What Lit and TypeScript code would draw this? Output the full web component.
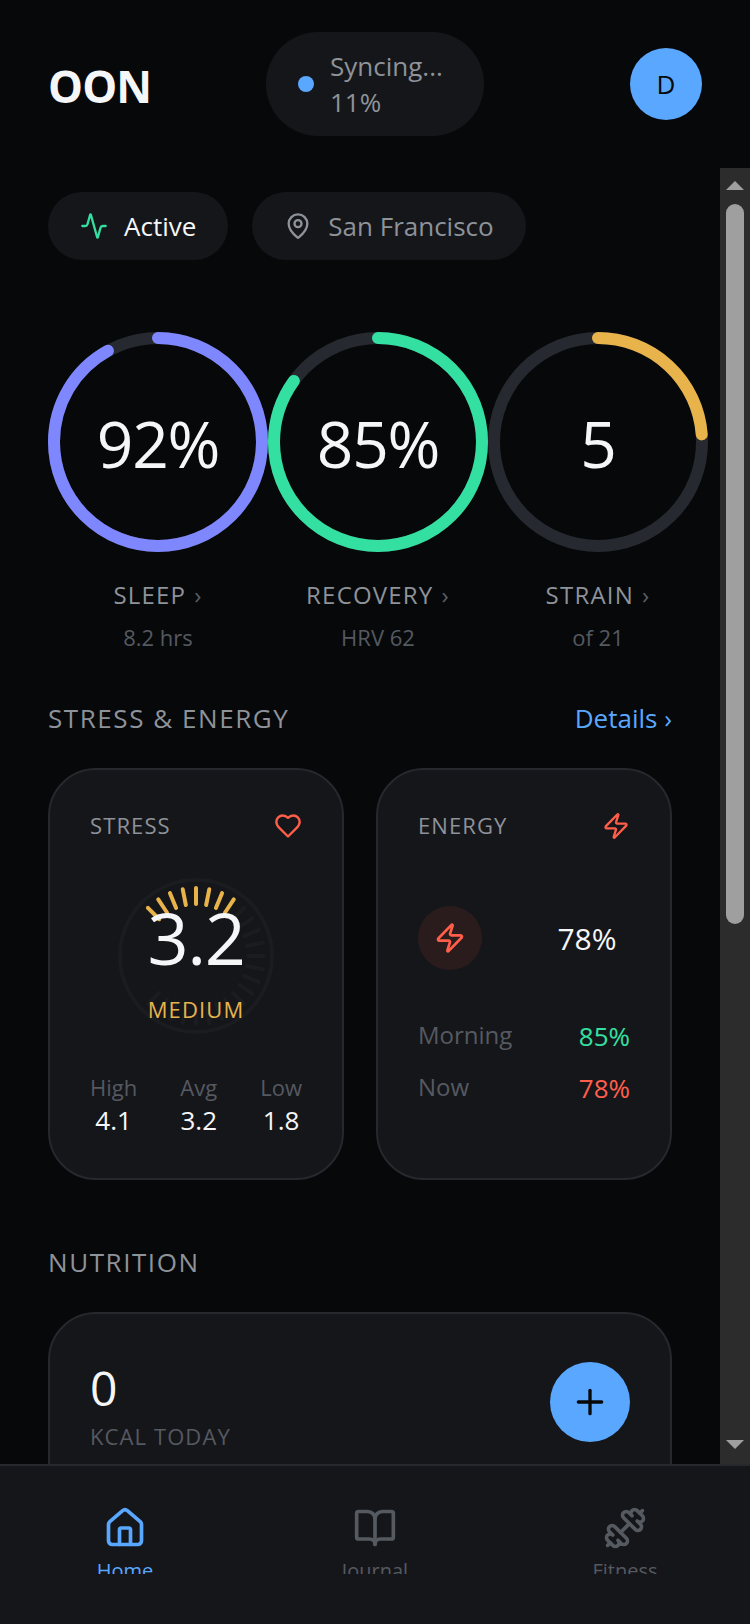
import { LitElement, html, css, svg } from "lit";
import { customElement, property } from "lit/decorators.js";

const ICONS: Record<string, unknown> = {
  activity: svg`<path d="M22 12h-2.48a2 2 0 0 0-1.93 1.46l-2.35 8.36a.25.25 0 0 1-.48 0L9.24 2.18a.25.25 0 0 0-.48 0l-2.35 8.36A2 2 0 0 1 4.49 12H2"/>`,
  pin: svg`<path d="M20 10c0 4.993-5.539 10.193-7.399 11.799a1 1 0 0 1-1.202 0C9.539 20.193 4 14.993 4 10a8 8 0 0 1 16 0"/><circle cx="12" cy="10" r="3"/>`,
  heart: svg`<path d="M19 14c1.49-1.46 3-3.21 3-5.5A5.5 5.5 0 0 0 16.5 3c-1.76 0-3 .5-4.5 2-1.5-1.5-2.74-2-4.5-2A5.5 5.5 0 0 0 2 8.5c0 2.3 1.5 4.05 3 5.5l7 7Z"/>`,
  zap: svg`<path d="M4 14a1 1 0 0 1-.78-1.63l9.9-10.2a.5.5 0 0 1 .86.46l-1.92 6.02A1 1 0 0 0 13 10h7a1 1 0 0 1 .78 1.63l-9.9 10.2a.5.5 0 0 1-.86-.46l1.92-6.02A1 1 0 0 0 11 14z"/>`,
  plus: svg`<path d="M5 12h14"/><path d="M12 5v14"/>`,
  home: svg`<path d="M15 21v-8a1 1 0 0 0-1-1h-4a1 1 0 0 0-1 1v8"/><path d="M3 10a2 2 0 0 1 .709-1.528l7-5.999a2 2 0 0 1 2.582 0l7 5.999A2 2 0 0 1 21 10v9a2 2 0 0 1-2 2H5a2 2 0 0 1-2-2z"/>`,
  book: svg`<path d="M12 7v14"/><path d="M3 18a1 1 0 0 1-1-1V4a1 1 0 0 1 1-1h5a4 4 0 0 1 4 4 4 4 0 0 1 4-4h5a1 1 0 0 1 1 1v13a1 1 0 0 1-1 1h-6a3 3 0 0 0-3 3 3 3 0 0 0-3-3z"/>`,
  dumbbell: svg`<path d="M17.596 12.768a2 2 0 1 0 2.829-2.829l-1.768-1.767a2 2 0 0 0 2.828-2.829l-2.828-2.828a2 2 0 0 0-2.829 2.828l-1.767-1.768a2 2 0 1 0-2.829 2.829z"/><path d="m2.5 21.5 1.4-1.4"/><path d="m20.1 3.9 1.4-1.4"/><path d="M5.343 21.485a2 2 0 1 0 2.829-2.828l1.767 1.768a2 2 0 1 0 2.829-2.829l-6.364-6.364a2 2 0 1 0-2.829 2.829l1.768 1.767a2 2 0 0 0-2.828 2.829z"/><path d="m9.6 14.4 4.8-4.8"/>`,
};

@customElement("line-icon")
class LineIcon extends LitElement {
  @property() name = "";

  static styles = css`
    :host { display: block; flex: none; width: 28px; height: 28px; }
    svg {
      display: block; width: 100%; height: 100%;
      fill: none; stroke: currentColor; stroke-width: 2;
      stroke-linecap: round; stroke-linejoin: round;
    }
  `;

  render() {
    return html`<svg viewBox="0 0 24 24" aria-hidden="true">${ICONS[this.name]}</svg>`;
  }
}

@customElement("metric-ring")
class MetricRing extends LitElement {
  @property() value = "";
  @property() label = "";
  @property() detail = "";
  @property() tone = "sleep";
  @property({ type: Number }) percent = 0;

  static styles = css`
    :host { display: block; flex: none; width: 220px; }
    .metric {
      display: flex; flex-direction: column; align-items: center; width: 100%;
      margin: 0; padding: 0; border: 0; background: none; font: inherit;
      color: inherit; cursor: pointer;
    }
    .dial { display: grid; width: 220px; height: 220px; place-items: center; }
    .dial > * { grid-area: 1 / 1; }
    .ring { display: block; width: 220px; height: 220px; fill: none; stroke-width: 12; }
    .track { stroke: #262a30; }
    .arc { stroke-linecap: round; }
    .sleep { stroke: #7f87ff; }
    .recovery { stroke: #34e0a1; }
    .strain { stroke: #e8b34b; }
    .value {
      padding-top: 4px; font-size: 64px; line-height: 90px; letter-spacing: -0.02em;
      color: #f5f6f8;
    }
    .label {
      display: flex; gap: 8px; margin-top: 26px; font-size: 24px; line-height: 34px;
      letter-spacing: 0.05em; color: #8e9299;
    }
    .chevron { color: #5a5e66; }
    .detail { margin-top: 10px; font-size: 22px; line-height: 30px; color: #555960; }
  `;

  render() {
    return html`
      <button class="metric" type="button">
        <span class="dial">
          <svg class="ring" viewBox="0 0 220 220" aria-hidden="true">
            <circle class="track" cx="110" cy="110" r="104"/>
            <circle class="arc ${this.tone}" cx="110" cy="110" r="104" pathLength="100"
              stroke-dasharray="${this.percent} 100" transform="rotate(-90 110 110)"/>
          </svg>
          <span class="value">${this.value}</span>
        </span>
        <span class="label">${this.label}<span class="chevron">›</span></span>
        <span class="detail">${this.detail}</span>
      </button>
    `;
  }
}

@customElement("stress-gauge")
class StressGauge extends LitElement {
  @property({ type: Number }) value = 0;
  @property() level = "";

  static styles = css`
    :host { display: grid; width: 180px; height: 180px; place-items: center; }
    .dial { width: 180px; height: 180px; grid-area: 1 / 1; fill: none; stroke-width: 4; }
    .rim { stroke: #1a1c20; }
    .tick { stroke: #1a1c20; stroke-linecap: round; }
    .lit { stroke: #e8b34b; }
    .reading {
      grid-area: 1 / 1; display: flex; flex-direction: column; align-items: center; gap: 6px;
    }
    .value { font-size: 72px; line-height: 100px; letter-spacing: -0.02em; color: #f5f6f8; }
    .level { font-size: 22px; line-height: 32px; letter-spacing: 0.05em; color: #e8b34b; }
  `;

  render() {
    const total = 25;
    const lit = Math.round((this.value / 10) * total);
    return html`
      <svg class="dial" viewBox="0 0 180 180" aria-hidden="true">
        <circle class="rim" cx="90" cy="90" r="76"/>
        ${Array.from({ length: total }, (_, i) => svg`
          <line class="tick ${i < lit ? "lit" : ""}" x1="90" y1="22" x2="90" y2="38"
            transform="rotate(${-45 + (i * 270) / (total - 1)} 90 90)"/>`)}
      </svg>
      <div class="reading">
        <span class="value">${this.value}</span>
        <span class="level">${this.level}</span>
      </div>
    `;
  }
}

@customElement("scroll-rail")
class ScrollRail extends LitElement {
  @property({ type: Number }) span = 100;

  static styles = css`
    :host {
      display: grid; grid-template-rows: 36px 1fr 36px; justify-items: center;
      width: 30px; background: #2c2c2c;
    }
    .arrow { display: block; width: 18px; height: 9px; fill: #9f9f9f; }
    .up { margin-top: 13px; }
    .down { margin-top: 12px; }
    .thumb { width: 18px; border-radius: 9px; background: #9f9f9f; }
  `;

  render() {
    return html`
      <svg class="arrow up" viewBox="0 0 18 9"><path d="M0 9 9 0l9 9z"/></svg>
      <div class="thumb" style="height:${this.span}%"></div>
      <svg class="arrow down" viewBox="0 0 18 9"><path d="M0 0h18L9 9z"/></svg>
    `;
  }
}

@customElement("app-root")
class AppRoot extends LitElement {
  static styles = css`
    :host {
      display: flex; flex-direction: column; height: 100vh; overflow: hidden;
      background: #07080a; color: #f5f6f8;
      font-family: "Open Sans", "Noto Sans", sans-serif; font-size: 26px; line-height: 36px;
    }
    h1, h2, h3, p, dl, dd { margin: 0; font-weight: 400; }
    button { font: inherit; border: 0; padding: 0; cursor: pointer; }
    a { text-decoration: none; }

    .header {
      display: grid; grid-template-columns: 1fr auto 1fr; align-items: center;
      padding: 32px 48px;
    }
    .brand {
      padding-top: 4px; font-size: 44px; line-height: 60px; font-weight: 700;
      letter-spacing: -0.02em;
    }
    .sync {
      display: flex; align-items: center; gap: 16px; box-sizing: border-box; width: 218px;
      padding: 16px 32px; border-radius: 52px; background: #15161a; color: #8e9299;
    }
    .dot { flex: none; width: 16px; height: 16px; border-radius: 50%; background: #5aa7ff; }
    .avatar {
      justify-self: end; width: 72px; height: 72px; border-radius: 50%;
      background: #5aa7ff; color: #07080a;
    }

    .body { display: flex; flex: 1; min-height: 0; }
    .content {
      flex: 1; min-width: 0; overflow: hidden auto; scrollbar-width: none;
      padding: 24px 48px 48px;
    }
    .chips { display: flex; gap: 24px; }
    .chip {
      display: flex; align-items: center; gap: 16px; padding: 16px 32px;
      border-radius: 34px; background: #15161a; color: #8e9299;
    }
    .chip.active { color: #f5f6f8; }
    .chip.active line-icon { color: #34e0a1; }
    .rings { display: flex; margin: 72px 0 48px; }

    .title { display: flex; justify-content: space-between; margin-bottom: 32px; }
    .title h2 { font-size: 26px; letter-spacing: 0.06em; color: #8e9299; }
    .title a { color: #5aa7ff; }
    .cards { display: grid; grid-template-columns: 1fr 1fr; gap: 32px; margin-bottom: 64px; }
    .card {
      padding: 40px; border: 2px solid #26282d; border-radius: 48px; background: #15161a;
    }
    .card-head {
      display: flex; align-items: center; justify-content: space-between;
      height: 32px; color: #ff5f4a;
    }
    .card-head h3 {
      padding-bottom: 2px; font-size: 22px; line-height: 30px; letter-spacing: 0.05em;
      color: #8e9299;
    }
    stress-gauge { margin: 24px auto; }
    .stats { display: flex; justify-content: space-between; text-align: center; }
    .stats dt { padding-top: 2px; font-size: 22px; line-height: 30px; color: #555960; }

    .energy { display: flex; align-items: center; justify-content: space-between; margin: 64px 0 48px; }
    .orb {
      display: grid; place-items: center; width: 64px; height: 64px;
      border-radius: 50%; background: #2a1c1d; color: #ff5f4a;
    }
    .orb line-icon { width: 32px; height: 32px; }
    .charge { width: 86px; padding-top: 2px; text-align: center; font-size: 30px; line-height: 42px; }
    .levels { display: grid; gap: 16px; }
    .level { display: flex; justify-content: space-between; }
    .level dt { font-size: 24px; line-height: 34px; color: #555960; }
    .good { color: #34e0a1; }
    .low { color: #ff5f4a; }

    .intake { display: flex; justify-content: space-between; align-items: flex-start; min-height: 160px; }
    .kcal { font-size: 48px; line-height: 68px; }
    .unit { font-size: 22px; line-height: 28px; letter-spacing: 0.05em; color: #555960; }
    .add {
      display: grid; place-items: center; width: 80px; height: 80px; margin-top: 8px;
      border-radius: 50%; background: #5aa7ff; color: #07080a;
    }
    .add line-icon { width: 40px; height: 40px; }

    .nav {
      display: grid; grid-template-columns: repeat(3, 1fr); padding-bottom: 50px;
      border-top: 2px solid #26282d; background: #15161a;
    }
    .tab {
      display: flex; flex-direction: column; align-items: center; gap: 8px;
      box-sizing: border-box; height: 108px; padding-top: 40px; overflow: hidden;
      font-size: 20px; line-height: 26px; color: #555960;
    }
    .tab line-icon { width: 44px; height: 44px; }
    .tab.current { color: #5aa7ff; }
  `;

  render() {
    return html`
      <header class="header">
        <h1 class="brand">OON</h1>
        <div class="sync" role="status"><span class="dot"></span><span>Syncing... 11%</span></div>
        <button class="avatar" type="button">D</button>
      </header>

      <div class="body">
        <main class="content">
          <div class="chips">
            <button class="chip active" type="button"><line-icon name="activity"></line-icon>Active</button>
            <button class="chip" type="button"><line-icon name="pin"></line-icon>San Francisco</button>
          </div>

          <section class="rings">
            <metric-ring value="92%" label="SLEEP" detail="8.2 hrs" tone="sleep" percent="92"></metric-ring>
            <metric-ring value="85%" label="RECOVERY" detail="HRV 62" tone="recovery" percent="85"></metric-ring>
            <metric-ring value="5" label="STRAIN" detail="of 21" tone="strain" percent="${(5 / 21) * 100}"></metric-ring>
          </section>

          <section>
            <div class="title"><h2>STRESS &amp; ENERGY</h2><a href="#details">Details ›</a></div>
            <div class="cards">
              <article class="card">
                <div class="card-head"><h3>STRESS</h3><line-icon name="heart"></line-icon></div>
                <stress-gauge value="3.2" level="MEDIUM"></stress-gauge>
                <dl class="stats">
                  <div><dt>High</dt><dd>4.1</dd></div>
                  <div><dt>Avg</dt><dd>3.2</dd></div>
                  <div><dt>Low</dt><dd>1.8</dd></div>
                </dl>
              </article>
              <article class="card">
                <div class="card-head"><h3>ENERGY</h3><line-icon name="zap"></line-icon></div>
                <div class="energy">
                  <span class="orb"><line-icon name="zap"></line-icon></span>
                  <span class="charge">78%</span>
                </div>
                <dl class="levels">
                  <div class="level"><dt>Morning</dt><dd class="good">85%</dd></div>
                  <div class="level"><dt>Now</dt><dd class="low">78%</dd></div>
                </dl>
              </article>
            </div>
          </section>

          <section>
            <div class="title"><h2>NUTRITION</h2></div>
            <article class="card intake">
              <div>
                <p class="kcal">0</p>
                <p class="unit">KCAL TODAY</p>
              </div>
              <button class="add" type="button" aria-label="Add"><line-icon name="plus"></line-icon></button>
            </article>
          </section>
        </main>
        <scroll-rail span="58.8"></scroll-rail>
      </div>

      <nav class="nav">
        <a class="tab current" href="#home"><line-icon name="home"></line-icon>Home</a>
        <a class="tab" href="#journal"><line-icon name="book"></line-icon>Journal</a>
        <a class="tab" href="#fitness"><line-icon name="dumbbell"></line-icon>Fitness</a>
      </nav>
    `;
  }
}
